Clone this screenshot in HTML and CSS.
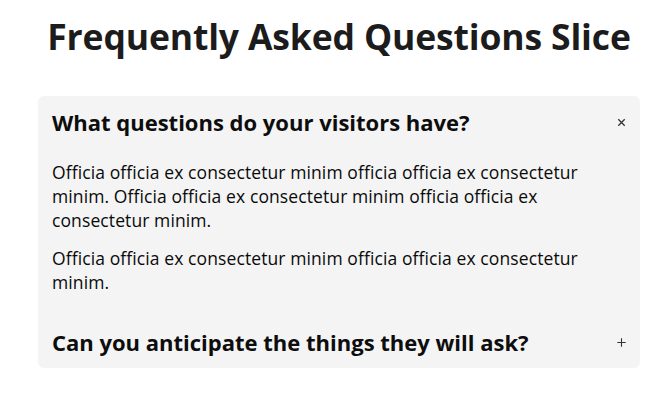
FILE: index.html
```html
<!DOCTYPE html>
<html lang="en">
<head>
<meta charset="utf-8">
<title>Frequently Asked Questions Slice</title>
<link rel="stylesheet" href="styles.css">
</head>
<body>
<main class="faq">
  <h1 class="faq-title">Frequently Asked Questions Slice</h1>
  <section class="faq-panel">
    <div class="faq-item">
      <div class="faq-question">
        <h2 class="faq-q-text">What questions do your visitors have?</h2>
        <span class="faq-icon" aria-label="close">
          <svg width="9" height="9" viewBox="0 0 9 9"><path d="M1.3 1.3 L7.7 7.7 M7.7 1.3 L1.3 7.7" stroke="#333" stroke-width="1.3" fill="none"/></svg>
        </span>
      </div>
      <div class="faq-answer">
        <p>Officia officia ex consectetur minim officia officia ex consectetur minim. Officia officia ex consectetur minim officia officia ex consectetur minim.</p>
        <p>Officia officia ex consectetur minim officia officia ex consectetur minim.</p>
      </div>
    </div>
    <div class="faq-item">
      <div class="faq-question">
        <h2 class="faq-q-text">Can you anticipate the things they will ask?</h2>
        <span class="faq-icon" aria-label="open">
          <svg width="9" height="9" viewBox="0 0 9 9"><path d="M4.5 0.3 V8.7 M0.3 4.5 H8.7" stroke="#333" stroke-width="1.1" fill="none"/></svg>
        </span>
      </div>
    </div>
  </section>
</main>
</body>
</html>
```
FILE: styles.css
```css
html, body {
  margin: 0;
  padding: 0;
  background: #ffffff;
}
body {
  font-family: "Open Sans", "Noto Sans", sans-serif;
  color: #111111;
}
.faq {
  width: 602px;
  margin-left: 38px;
  padding-top: 15px;
}
.faq-title {
  margin: 0 0 39px;
  font-size: 35.5px;
  line-height: 42px;
  font-weight: 700;
  text-align: center;
  color: #1c1c1c;
  letter-spacing: -0.15px;
}
.faq-panel {
  background: #f4f4f4;
  border-radius: 6px;
  padding: 11px 14px 11px 14px;
}
.faq-item + .faq-item {
  margin-top: 33px;
}
.faq-question {
  display: flex;
  align-items: center;
  justify-content: space-between;
  height: 30px;
}
.faq-q-text {
  margin: 0;
  font-size: 22px;
  line-height: 30px;
  font-weight: 700;
  color: #0d0d0d;
}
.faq-icon {
  display: flex;
  width: 9px;
  height: 9px;
}
.faq-answer {
  padding: 23px 1px 0 0;
}
.faq-answer p {
  margin: 0 0 14px;
  font-size: 17.5px;
  line-height: 24px;
  letter-spacing: 0.1px;
  color: #0a0a0a;
}
.faq-answer p:last-child {
  margin-bottom: 0;
}
```
